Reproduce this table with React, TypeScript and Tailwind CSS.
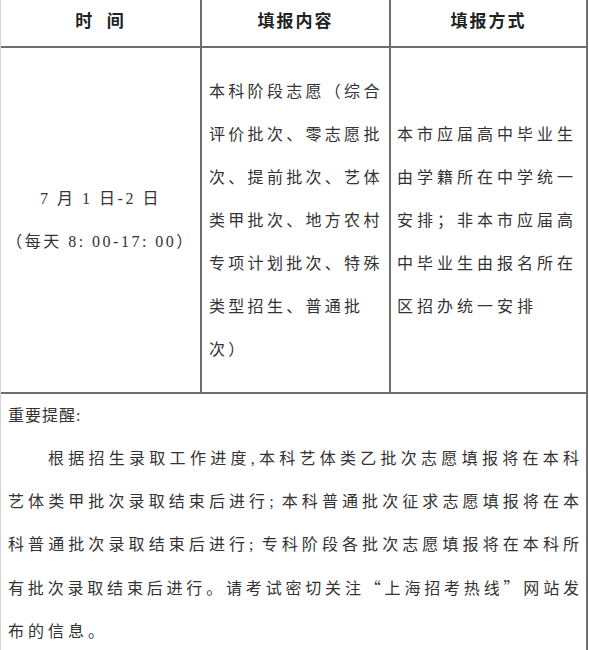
import React from 'react';

const font = { fontFamily: '"Liberation Serif", "Noto Sans CJK SC", serif' };
const cjk = { fontFamily: '"Noto Sans CJK SC", sans-serif' };

const contentLines = [
  '本科阶段志愿（综合',
  '评价批次、零志愿批',
  '次、提前批次、艺体',
  '类甲批次、地方农村',
  '专项计划批次、特殊',
  '类型招生、普通批',
  '次）',
];

const methodLines = [
  '本市应届高中毕业生',
  '由学籍所在中学统一',
  '安排；非本市应届高',
  '中毕业生由报名所在',
  '区招办统一安排',
];

const noteLines = [
  '艺体类甲批次录取结束后进行; 本科普通批次征求志愿填报将在本',
  '科普通批次录取结束后进行; 专科阶段各批次志愿填报将在本科所',
];

const App = () => {
  return (
    <div className="w-[589px] h-[650px] overflow-hidden bg-white text-[#222]" style={font}>
      <div className="w-[588px] h-full border-l border-l-[#d4d4d4] border-r-2 border-r-[#707070]">
        {/* header row */}
        <div className="grid grid-cols-[201px_189px_1fr] h-[48px] border-b-2 border-b-[#6e6e6e] text-[17px] font-bold tracking-[2px]">
          <div className="flex items-center justify-center border-r-2 border-r-[#6e6e6e] pb-[3px]">时&nbsp;&nbsp;间</div>
          <div className="flex items-center justify-center border-r-2 border-r-[#6e6e6e] pb-[3px]">填报内容</div>
          <div className="flex items-center justify-center pb-[3px]">填报方式</div>
        </div>

        {/* body row */}
        <div className="grid grid-cols-[201px_189px_1fr] h-[346px] border-b-2 border-b-[#6e6e6e] text-[16px] leading-[43px] text-[#333]">
          <div className="flex flex-col items-center justify-center border-r-2 border-r-[#6e6e6e] tracking-[2.5px]">
            <div>7 月 1 日-2 日</div>
            <div>（每天 8: 00-17: 00）</div>
          </div>
          <div className="flex flex-col justify-center border-r-2 border-r-[#6e6e6e] pl-[7px] tracking-[3.3px] whitespace-nowrap">
            {contentLines.map((line) => (
              <div key={line}>{line}</div>
            ))}
          </div>
          <div className="flex flex-col justify-center pl-[6px] tracking-[4px] whitespace-nowrap">
            {methodLines.map((line) => (
              <div key={line}>{line}</div>
            ))}
          </div>
        </div>

        {/* notes */}
        <div className="px-[7px] text-[16px] leading-[43px] text-[#333]">
          <div className="tracking-[1px]">重要提醒:</div>
          <div className="pl-[40px] text-justify [text-align-last:justify] whitespace-nowrap">
            根据招生录取工作进度,本科艺体类乙批次志愿填报将在本科
          </div>
          {noteLines.map((line) => (
            <div key={line} className="text-justify [text-align-last:justify] whitespace-nowrap">
              {line}
            </div>
          ))}
          <div className="text-justify [text-align-last:justify] whitespace-nowrap">
            有批次录取结束后进行。请考试密切关注<span style={cjk}>“</span>上海招考热线<span style={cjk}>”</span>网站发
          </div>
          <div className="tracking-[4px]">布的信息。</div>
        </div>
      </div>
    </div>
  );
};

export default App;
